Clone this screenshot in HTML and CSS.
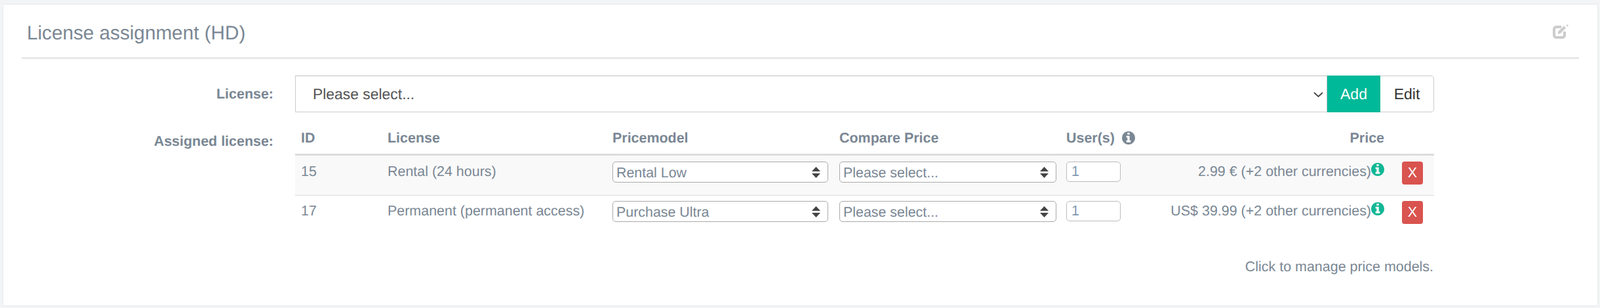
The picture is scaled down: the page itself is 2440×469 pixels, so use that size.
FILE: index.html
```html
<!DOCTYPE html>
<html lang="en">
<head>
    <meta charset="UTF-8">
    <meta name="viewport" content="width=device-width, initial-scale=1.0">
    <title>License assignment (HD)</title>
    <link rel="stylesheet" href="styles.css">
</head>
<body>
    <div class="panel">
        <div class="panel-head">
            <h3 class="panel-title">License assignment (HD)</h3>
            <svg class="edit-icon" viewBox="0 0 24 22" aria-hidden="true">
                <path d="M13 4H5.500A3.500 3.500 0 0 0 2 7.500v9A3.500 3.500 0 0 0 5.500 20h9a3.500 3.500 0 0 0 3.500-3.500V11" fill="none" stroke="#cccccc" stroke-width="4"/>
                <path d="M8 11l9-8.500 3 3-9 9H8z" fill="#cccccc"/>
                <path d="M20.500 2l1.500-2 2 2-2 1.500z" fill="#cccccc"/>
            </svg>
        </div>

        <div class="panel-body">
            <div class="form-row form-row-select">
                <label class="form-label">License:</label>
                <div class="input-group">
                    <div class="select-large">
                        <select>
                            <option>Please select...</option>
                        </select>
                        <svg class="chevron" viewBox="0 0 15 8" aria-hidden="true">
                            <path d="M1 1l6.500 6L14 1" fill="none" stroke="#444444" stroke-width="1.800"/>
                        </svg>
                    </div>
                    <button class="btn btn-add">Add</button>
                    <button class="btn btn-edit">Edit</button>
                </div>
            </div>

            <div class="form-row">
                <label class="form-label form-label-table">Assigned license:</label>
                <div>
                    <table class="license-table">
                        <colgroup>
                            <col class="col-id">
                            <col class="col-license">
                            <col class="col-model">
                            <col class="col-compare">
                            <col class="col-users">
                            <col class="col-price">
                            <col class="col-action">
                        </colgroup>
                        <thead>
                            <tr>
                                <th>ID</th>
                                <th>License</th>
                                <th>Pricemodel</th>
                                <th>Compare Price</th>
                                <th>User(s) <svg class="info-icon info-head" viewBox="0 0 1536 1536" aria-hidden="true"><path d="M1024 1248v-160q0-14-9-23t-23-9h-96v-512q0-14-9-23t-23-9h-320q-14 0-23 9t-9 23v160q0 14 9 23t23 9h96v320h-96q-14 0-23 9t-9 23v160q0 14 9 23t23 9h448q14 0 23-9t9-23zm-128-896v-160q0-14-9-23t-23-9h-192q-14 0-23 9t-9 23v160q0 14 9 23t23 9h192q14 0 23-9t9-23zm640 416q0 209-103 385.500t-279.500 279.500-385.500 103-385.500-103-279.500-279.500-103-385.500 103-385.500 279.500-279.500 385.500-103 385.500 103 279.500 279.500 103 385.500z"/></svg></th>
                                <th class="cell-price">Price</th>
                                <th></th>
                            </tr>
                        </thead>
                        <tbody>
                            <tr class="row-striped">
                                <td>15</td>
                                <td>Rental (24 hours)</td>
                                <td>
                                    <div class="select-small">
                                        <select><option>Rental Low</option></select>
                                        <svg class="updown" viewBox="0 0 13 17" aria-hidden="true"><path d="M6.500 0L13 7H0zM0 10h13l-6.500 7z"/></svg>
                                    </div>
                                </td>
                                <td>
                                    <div class="select-small select-compare">
                                        <select><option>Please select...</option></select>
                                        <svg class="updown" viewBox="0 0 13 17" aria-hidden="true"><path d="M6.500 0L13 7H0zM0 10h13l-6.500 7z"/></svg>
                                    </div>
                                </td>
                                <td><input class="users-input" type="text" value="1"></td>
                                <td class="cell-price">2.99 € (+2 other currencies)<svg class="info-icon info-price" viewBox="0 0 1536 1536" aria-hidden="true"><path d="M1024 1248v-160q0-14-9-23t-23-9h-96v-512q0-14-9-23t-23-9h-320q-14 0-23 9t-9 23v160q0 14 9 23t23 9h96v320h-96q-14 0-23 9t-9 23v160q0 14 9 23t23 9h448q14 0 23-9t9-23zm-128-896v-160q0-14-9-23t-23-9h-192q-14 0-23 9t-9 23v160q0 14 9 23t23 9h192q14 0 23-9t9-23zm640 416q0 209-103 385.500t-279.500 279.500-385.500 103-385.500-103-279.500-279.500-103-385.500 103-385.500 279.500-279.500 385.500-103 385.500 103 279.500 279.500 103 385.500z"/></svg></td>
                                <td><button class="btn-remove">X</button></td>
                            </tr>
                            <tr>
                                <td>17</td>
                                <td>Permanent (permanent access)</td>
                                <td>
                                    <div class="select-small">
                                        <select><option>Purchase Ultra</option></select>
                                        <svg class="updown" viewBox="0 0 13 17" aria-hidden="true"><path d="M6.500 0L13 7H0zM0 10h13l-6.500 7z"/></svg>
                                    </div>
                                </td>
                                <td>
                                    <div class="select-small select-compare">
                                        <select><option>Please select...</option></select>
                                        <svg class="updown" viewBox="0 0 13 17" aria-hidden="true"><path d="M6.500 0L13 7H0zM0 10h13l-6.500 7z"/></svg>
                                    </div>
                                </td>
                                <td><input class="users-input" type="text" value="1"></td>
                                <td class="cell-price">US$ 39.99 (+2 other currencies)<svg class="info-icon info-price" viewBox="0 0 1536 1536" aria-hidden="true"><path d="M1024 1248v-160q0-14-9-23t-23-9h-96v-512q0-14-9-23t-23-9h-320q-14 0-23 9t-9 23v160q0 14 9 23t23 9h96v320h-96q-14 0-23 9t-9 23v160q0 14 9 23t23 9h448q14 0 23-9t9-23zm-128-896v-160q0-14-9-23t-23-9h-192q-14 0-23 9t-9 23v160q0 14 9 23t23 9h192q14 0 23-9t9-23zm640 416q0 209-103 385.500t-279.500 279.500-385.500 103-385.500-103-279.500-279.500-103-385.500 103-385.500 279.500-279.500 385.500-103 385.500 103 279.500 279.500 103 385.500z"/></svg></td>
                                <td><button class="btn-remove">X</button></td>
                            </tr>
                        </tbody>
                    </table>
                    <p class="table-note">Click to manage price models.</p>
                </div>
            </div>
        </div>
    </div>
</body>
</html>
```

FILE: styles.css
```css
* {
    box-sizing: border-box;
}
html, body {
    height: 100%;
}
body {
    margin: 0;
    padding: 7px 4px 4px 5px;
    background: #f3f4f5;
    font-family: "Liberation Sans", Arial, sans-serif;
    font-size: 21.450px;
    line-height: 30px;
    color: #7a8794;
    text-rendering: geometricPrecision;
}
.panel {
    height: 458px;
    padding: 0 28px;
    background: #fff;
    box-shadow: 0 0 2px rgba(0,0,0,0.12);
}
.panel-head {
    display: flex;
    justify-content: space-between;
    align-items: flex-start;
    height: 83px;
    padding: 30px 16px 0 8px;
    border-bottom: 3px solid #e8e8e8;
}
.panel-title {
    margin: 1px 0 0;
    font-size: 29.700px;
    line-height: 26px;
    font-weight: normal;
    color: #7a8794;
}
.edit-icon {
    width: 24px;
    height: 22px;
}
.panel-body {
    padding-top: 25px;
}
.form-row {
    display: grid;
    grid-template-columns: 384px 1737px;
    column-gap: 33px;
}
.form-row-select {
    margin-bottom: 15px;
}
.form-label {
    font-weight: bold;
    text-align: right;
    padding-top: 13px;
}
.form-label-table {
    padding-top: 14px;
}

/* license select + buttons */
.input-group {
    display: flex;
    height: 56px;
}
.select-large {
    position: relative;
    flex: 1;
}
.select-large select {
    width: 100%;
    height: 100%;
    padding: 0 26px;
    appearance: none;
    background: #fff;
    border: 1px solid #ccc;
    border-top-color: #c0c0c0;
    border-radius: 0;
    font-family: inherit;
    font-size: 22.900px;
    color: #555;
    text-rendering: geometricPrecision;
}
.chevron {
    position: absolute;
    top: 25px;
    right: 6px;
    width: 15px;
    height: 8px;
}
.btn {
    font-family: inherit;
    font-size: 23px;
    text-rendering: geometricPrecision;
    cursor: pointer;
}
.btn-add {
    width: 81px;
    background: #00b998;
    border: none;
    color: #fff;
}
.btn-edit {
    width: 82px;
    background: #fff;
    border: 1px solid #ccc;
    border-left: none;
    border-radius: 0 5px 5px 0;
    color: #333;
}

/* assigned licenses */
.license-table {
    width: 100%;
    table-layout: fixed;
    border-collapse: separate;
    border-spacing: 0;
}
.col-id { width: 132px; }
.col-license { width: 343px; }
.col-model { width: 346px; }
.col-compare { width: 346px; }
.col-users { width: 120px; }
.col-price { width: 383px; }
.license-table th {
    height: 51px;
    padding: 9px 9px 0;
    border-bottom: 3px solid #ddd;
    text-align: left;
    vertical-align: top;
    white-space: nowrap;
}
.license-table td {
    padding: 9px;
    vertical-align: top;
}
.license-table tbody tr + tr td {
    padding-top: 8px;
    border-top: 1px solid #ddd;
}
.license-table .cell-price {
    text-align: right;
    white-space: nowrap;
}
.row-striped td {
    height: 60px;
    background: #f9f9f9;
}
.select-small {
    position: relative;
    width: 329px;
}
.select-compare {
    width: 331px;
}
.select-small select {
    display: block;
    width: 100%;
    height: 32px;
    padding: 2px 30px 0 5px;
    appearance: none;
    background: #fff;
    border: 1px solid #aaa;
    border-radius: 5px;
    font-family: inherit;
    font-size: 21.400px;
    color: #7a8794;
    text-rendering: geometricPrecision;
}
.updown {
    position: absolute;
    top: 8px;
    right: 12px;
    width: 13px;
    height: 17px;
    fill: #444;
}
.users-input {
    display: block;
    width: 83px;
    height: 31px;
    padding: 0 7px;
    border: 1px solid #bbb;
    border-radius: 5px;
    font-family: inherit;
    font-size: 21.400px;
    color: #7f97b0;
}
.info-icon {
    width: 20px;
    height: 20px;
}
.info-head {
    margin-left: 5px;
    vertical-align: -3px;
    fill: #7a8794;
}
.info-price {
    vertical-align: 0;
    fill: #11b795;
}
.btn-remove {
    display: block;
    width: 32px;
    height: 35px;
    padding: 0;
    background: #d9534f;
    border: none;
    border-radius: 4px;
    font-family: inherit;
    font-size: 21.450px;
    color: #fff;
    margin-left: 9px;
    cursor: pointer;
}
.table-note {
    margin: 41px 1px 0 0;
    text-align: right;
}
```
